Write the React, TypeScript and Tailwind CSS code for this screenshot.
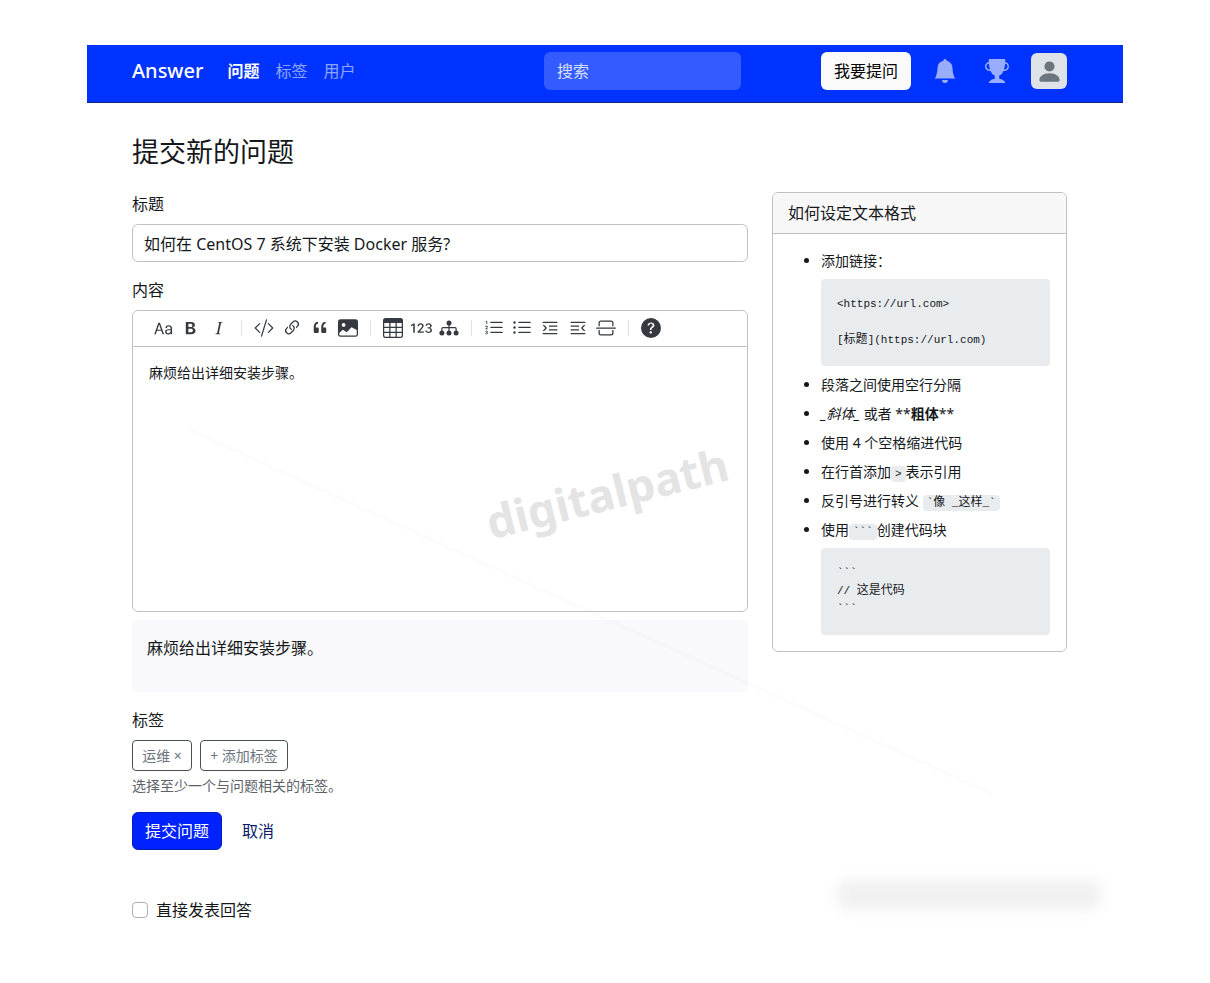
import React from "react";
import type { ReactNode } from "react";
import {
  Bs123,
  BsBellFill,
  BsCodeSlash,
  BsHr,
  BsImageFill,
  BsLink45Deg,
  BsListOl,
  BsListUl,
  BsPersonFill,
  BsQuestionCircleFill,
  BsQuote,
  BsTable,
  BsTextIndentLeft,
  BsTextIndentRight,
  BsTrophyFill,
  BsType,
  BsTypeBold,
  BsTypeItalic,
} from "react-icons/bs";

function ChartIcon() {
  return (
    <svg viewBox="0 0 20 20" width="20" height="20" fill="currentColor" aria-hidden="true">
      <circle cx="10" cy="5" r="2.5" />
      <circle cx="2.9" cy="15" r="2.5" />
      <circle cx="10" cy="15" r="2.5" />
      <circle cx="17.1" cy="15" r="2.5" />
      <path d="M10 6v8M2.9 13V10.5Q2.9 9.6 3.8 9.6H16.2Q17.1 9.6 17.1 10.5V13" fill="none" stroke="currentColor" strokeWidth="1.2" />
    </svg>
  );
}

const toolGroups: { label: string; icon: ReactNode }[][] = [
  [
    { label: "标题", icon: <BsType size={20} /> },
    { label: "粗体", icon: <BsTypeBold size={20} /> },
    { label: "斜体", icon: <BsTypeItalic size={20} /> },
  ],
  [
    { label: "代码", icon: <BsCodeSlash size={20} /> },
    { label: "链接", icon: <BsLink45Deg size={20} /> },
    { label: "引用", icon: <BsQuote size={20} /> },
    { label: "图片", icon: <BsImageFill size={20} /> },
  ],
  [
    { label: "表格", icon: <BsTable size={20} /> },
    { label: "公式", icon: <Bs123 size={21} /> },
    { label: "图表", icon: <ChartIcon /> },
  ],
  [
    { label: "有序列表", icon: <BsListOl size={20} /> },
    { label: "无序列表", icon: <BsListUl size={20} /> },
    { label: "增加缩进", icon: <BsTextIndentLeft size={20} /> },
    { label: "减少缩进", icon: <BsTextIndentRight size={20} /> },
    { label: "分隔线", icon: <BsHr size={20} /> },
  ],
  [{ label: "帮助", icon: <BsQuestionCircleFill size={20} /> }],
];

function Toolbar() {
  return (
    <div className="flex h-9 items-center border-b border-[#bfc2c5] px-4 pb-px text-[#343a40]">
      {toolGroups.map((group, i) => (
        <React.Fragment key={i}>
          {i > 0 && <span className="mx-2 h-4 w-px bg-[#dee2e6]" />}
          {group.map((tool) => (
            <button key={tool.label} type="button" aria-label={tool.label} className="flex size-7 items-center justify-center">
              {tool.icon}
            </button>
          ))}
        </React.Fragment>
      ))}
    </div>
  );
}

function Code({ children }: { children: ReactNode }) {
  return (
    <code className="rounded bg-[#e9ecef] px-1 py-0.5 font-[Liberation_Mono,Noto_Sans_CJK_SC,monospace] text-[11px] leading-none">{children}</code>
  );
}

function CodeBlock({ lines }: { lines: ReactNode[] }) {
  return (
    <pre className="mt-2 rounded bg-[#e9ecef] px-4 pt-4 pb-[17px] font-[Liberation_Mono,Noto_Sans_CJK_SC,monospace] text-[11px] leading-[18px]">
      {lines.map((line, i) => (
        <span key={i} className="flex h-[18px] items-center">{line}</span>
      ))}
    </pre>
  );
}

function Header() {
  return (
    <header className="flex h-[58px] items-start border-b border-[#10227a] bg-[#0033ff] pr-14 pl-[45px] pt-[7px]">
      <div className="flex h-[38px] flex-1 items-center">
        <a href="#" className="text-xl font-medium text-white">Answer</a>
        <nav className="ml-6 flex gap-4 text-base text-white/55">
          <a href="#" className="font-bold text-white">问题</a>
          <a href="#">标签</a>
          <a href="#">用户</a>
        </nav>
      </div>
      <input
        type="search"
        aria-label="搜索"
        placeholder="搜索"
        className="mr-20 h-[38px] w-[197px] rounded-md bg-white/20 px-[13px] text-base text-white placeholder:text-white/80"
      />
      <div className="flex h-[38px] items-center gap-4 text-white/60">
        <button type="button" className="h-[38px] rounded-md bg-[#fafafa] px-[13px] text-base text-black">我要提问</button>
        <button type="button" aria-label="通知" className="flex size-9 items-center justify-center"><BsBellFill size={24} /></button>
        <button type="button" aria-label="成就" className="flex size-9 items-center justify-center"><BsTrophyFill size={24} /></button>
        <button type="button" aria-label="账户" className="flex size-9 items-center justify-center rounded-md bg-[#dee2e6] text-[#6c757d]">
          <BsPersonFill size={27} />
        </button>
      </div>
    </header>
  );
}

function HelpCard() {
  return (
    <aside className="w-[295px] shrink-0 overflow-hidden rounded-md border border-[#bfc2c5]">
      <h2 className="border-b border-[#bfc2c5] bg-[#f7f7f7] px-[15px] py-2 text-base leading-6">如何设定文本格式</h2>
      <ul className="m-4 list-disc space-y-2 pl-8 text-sm leading-[21px]">
        <li>
          添加链接：
          <CodeBlock lines={["<https://url.com>", "", <>[<span className="text-xs">标题</span>](https://url.com)</>]} />
        </li>
        <li>段落之间使用空行分隔</li>
        <li><em>_斜体_</em> 或者 **<strong>粗体</strong>**</li>
        <li>使用 4 个空格缩进代码</li>
        <li>在行首添加<Code>&gt;</Code>表示引用</li>
        <li>反引号进行转义 <Code>`<span className="text-xs leading-none">像</span> _<span className="text-xs leading-none">这样</span>_`</Code></li>
        <li>
          使用<Code>```</Code>创建代码块
          <CodeBlock lines={["```", <>{"// "}<span className="text-xs">这是代码</span></>, "```"]} />
        </li>
      </ul>
    </aside>
  );
}

export default function App() {
  return (
    <div className="relative min-h-screen bg-white px-[87px] pt-[45px] pb-[61px] font-[Noto_Sans,Noto_Sans_CJK_SC,sans-serif] text-[#15181b]">
      <Header />
      <main className="pt-8 pr-14 pl-[45px]">
        <h1 className="mb-6 text-[27px] leading-[33px]">提交新的问题</h1>
        <div className="flex items-start gap-6">
          <form className="min-w-0 flex-1 text-base leading-6" onSubmit={(e) => e.preventDefault()}>
            <label htmlFor="title" className="mb-2 block">标题</label>
            <input
              id="title"
              defaultValue="如何在 CentOS 7 系统下安装 Docker 服务?"
              className="mb-4 block h-[38px] w-full rounded-md border border-[#bfc2c5] px-[11px]"
            />
            <label htmlFor="content" className="mb-2 block">内容</label>
            <div className="relative rounded-md border border-[#bfc2c5]">
              <Toolbar />
              <textarea
                id="content"
                defaultValue="麻烦给出详细安装步骤。"
                className="block h-[264px] w-full resize-none px-4 pt-[15px] text-sm leading-[21px]"
              />
              <span className="pointer-events-none absolute right-4 bottom-24 -rotate-14 text-[45px] leading-none font-bold text-[#e4e4e4] select-none">
                digitalpath
              </span>
            </div>
            <div className="mt-2 mb-4 h-[72px] rounded-md bg-[#f9f9fb] px-[15px] py-4">麻烦给出详细安装步骤。</div>

            <p className="mb-2">标签</p>
            <div className="flex gap-2 text-sm leading-[21px] text-[#6c757d]">
              <button type="button" className="h-[31px] w-[60px] rounded border border-[#495057] whitespace-nowrap">运维 ×</button>
              <button type="button" className="h-[31px] w-[88px] rounded border border-[#495057] whitespace-nowrap">+ 添加标签</button>
            </div>
            <p className="mt-1 mb-4 text-sm leading-[21px] text-[#5c6268]">选择至少一个与问题相关的标签。</p>

            <div className="flex gap-2">
              <button type="submit" className="h-[38px] rounded-md border border-[#0020b0] bg-[#0022ff] px-3 text-white">提交问题</button>
              <button type="button" className="h-[38px] px-3 text-[#0a1a66]">取消</button>
            </div>

            <label className="mt-12 flex items-center gap-2">
              <input type="checkbox" className="size-4 appearance-none rounded border border-[#adb0b3] bg-white" />
              直接发表回答
            </label>
          </form>
          <HelpCard />
        </div>
      </main>
      <svg className="pointer-events-none absolute top-[410px] left-[180px]" width="820" height="390" aria-hidden="true">
        <path d="M10 20L812 384" stroke="#000" strokeOpacity="0.01" strokeWidth="4" />
      </svg>
      <div className="pointer-events-none absolute right-[110px] bottom-[74px] h-7 w-[262px] bg-[#f0f0f0] blur-[7px]" />
    </div>
  );
}
